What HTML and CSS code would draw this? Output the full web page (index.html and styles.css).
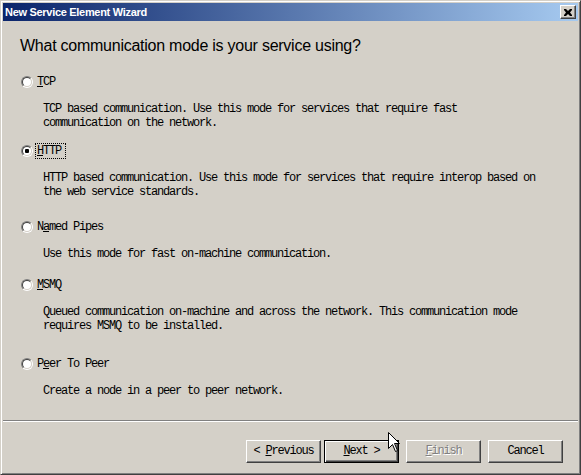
FILE: index.html
```html
<!DOCTYPE html>
<html lang="en">
<head>
    <meta charset="UTF-8">
    <title>New Service Element Wizard</title>
    <link rel="stylesheet" href="styles.css">
</head>
<body>
    <div class="window">
        <div class="title-bar">
            <span class="title-text">New Service Element Wizard</span>
            <button class="close-button" aria-label="Close">
                <svg width="8" height="7" viewBox="0 0 8 7">
                    <path d="M0 0h2l2 2 2-2h2v1l-2 2.5 2 2.5v1h-2l-2-2-2 2h-2v-1l2-2.5-2-2.5z" fill="#000"/>
                </svg>
            </button>
        </div>

        <div class="page">
            <h1 class="heading">What communication mode is your service using?</h1>

            <div class="option option-tcp">
                <div class="option-label">
                    <span class="radio"></span>
                    <span class="label-text"><u>T</u>CP</span>
                </div>
                <p class="option-desc">TCP based communication. Use this mode for services that require fast<br>communication on the network.</p>
            </div>

            <div class="option option-http">
                <div class="option-label">
                    <span class="radio checked"></span>
                    <span class="label-text focused"><u>H</u>TTP</span>
                </div>
                <p class="option-desc">HTTP based communication. Use this mode for services that require interop based on<br>the web service standards.</p>
            </div>

            <div class="option option-pipes">
                <div class="option-label">
                    <span class="radio"></span>
                    <span class="label-text">N<u>a</u>med Pipes</span>
                </div>
                <p class="option-desc">Use this mode for fast on-machine communication.</p>
            </div>

            <div class="option option-msmq">
                <div class="option-label">
                    <span class="radio"></span>
                    <span class="label-text"><u>M</u>SMQ</span>
                </div>
                <p class="option-desc">Queued communication on-machine and across the network. This communication mode<br>requires MSMQ to be installed.</p>
            </div>

            <div class="option option-peer">
                <div class="option-label">
                    <span class="radio"></span>
                    <span class="label-text">P<u>e</u>er To Peer</span>
                </div>
                <p class="option-desc">Create a node in a peer to peer network.</p>
            </div>
        </div>

        <div class="separator"></div>

        <div class="buttons">
            <button class="btn">&lt; <u>P</u>revious</button>
            <button class="btn btn-default"><u>N</u>ext &gt;</button>
            <button class="btn btn-disabled" disabled><u>F</u>inish</button>
            <button class="btn">Cancel</button>
        </div>

        <!-- puntero del raton en la captura -->
        <svg class="cursor" width="13" height="21" viewBox="0 0 13 21">
            <path d="M0.5 0.5V16.5L4.5 12.5L7.5 19.5L9.5 18.5L6.5 11.5H11.5Z" fill="#fff" stroke="#000" stroke-width="1"/>
        </svg>
    </div>
</body>
</html>
```

FILE: styles.css
```css
* {
    box-sizing: border-box;
}

body {
    margin: 0;
    padding: 0;
    background: #d4d0c8;
}

.window {
    position: relative;
    width: 581px;
    height: 475px;
    display: flex;
    flex-direction: column;
    background: #d4d0c8;
    border: 1px solid;
    border-color: #d4d0c8 #404040 #404040 #d4d0c8;
    box-shadow: inset 1px 1px #fff, inset -1px -1px #808080;
    padding: 2px;
}

/* barra de titulo */
.title-bar {
    height: 18px;
    display: flex;
    align-items: center;
    justify-content: space-between;
    padding: 0 2px 0 2px;
    background: linear-gradient(to right, #0a246a, #a6caf0);
}

.title-text {
    color: #fff;
    font-family: "Liberation Sans", Arial, sans-serif;
    font-weight: bold;
    font-size: 11px;
    letter-spacing: -0.3px;
}

.close-button {
    width: 16px;
    height: 14px;
    padding: 0;
    display: flex;
    align-items: center;
    justify-content: center;
    background: #d4d0c8;
    border: 1px solid;
    border-color: #fff #404040 #404040 #fff;
    box-shadow: inset -1px -1px #808080;
}

/* contenido */
.page {
    flex: 1;
    padding: 15px 0 0 18px;
}

.heading {
    margin: 0 0 0 -1px;
    font-family: "Liberation Sans", Arial, sans-serif;
    font-weight: normal;
    font-size: 16px;
    line-height: 20px;
    letter-spacing: -0.25px;
    color: #000;
}

.option-tcp { margin-top: 18px; }
.option-http { margin-top: 13px; }
.option-pipes { margin-top: 20px; }
.option-msmq { margin-top: 16px; }
.option-peer { margin-top: 23px; }

.option-label {
    height: 16px;
    display: flex;
    align-items: center;
}

.radio {
    position: relative;
    width: 12px;
    height: 12px;
    border-radius: 50%;
    border: 1px solid;
    border-color: #808080 #fff #fff #808080;
}

.radio::before {
    content: "";
    position: absolute;
    inset: 0;
    border-radius: 50%;
    border: 1px solid;
    border-color: #404040 #d4d0c8 #d4d0c8 #404040;
    background: #fff;
}

.radio.checked::after {
    content: "";
    position: absolute;
    left: 3px;
    top: 3px;
    width: 4px;
    height: 4px;
    background: #000;
    border-radius: 1px;
}

.label-text,
.option-desc,
.btn {
    font-family: "Liberation Mono", "Courier New", monospace;
    font-size: 12px;
    letter-spacing: -1.2px;
    color: #000;
}

.label-text {
    display: inline-block;
    margin-left: 2px;
    padding: 0 4px 0 1px;
    line-height: 14px;
    border: 1px solid transparent;
    white-space: pre;
}

.label-text.focused {
    border: 1px dotted #000;
}

.option-desc {
    margin: 12px 0 0 22px;
    line-height: 14px;
}

/* pie con botones */
.separator {
    height: 2px;
    border-top: 1px solid #808080;
    border-bottom: 1px solid #fff;
}

.buttons {
    display: flex;
    justify-content: flex-end;
    padding: 18px 15px 9px 0;
}

.btn {
    width: 75px;
    height: 23px;
    margin-left: 7px;
    padding: 0;
    line-height: 21px;
    background: #d4d0c8;
    border: 1px solid;
    border-color: #fff #404040 #404040 #fff;
    box-shadow: inset -1px -1px #808080;
    white-space: pre;
}

.btn:first-child {
    margin-left: 0;
}

.btn-default {
    margin-left: 3px;
    border: 1px solid #000;
    box-shadow: inset 1px 1px #fff, inset -1px -1px #404040, inset -2px -2px #808080;
}

.btn-disabled {
    color: #808080;
    text-shadow: 1px 1px #fff;
}

.cursor {
    position: absolute;
    left: 387px;
    top: 431px;
}
```
